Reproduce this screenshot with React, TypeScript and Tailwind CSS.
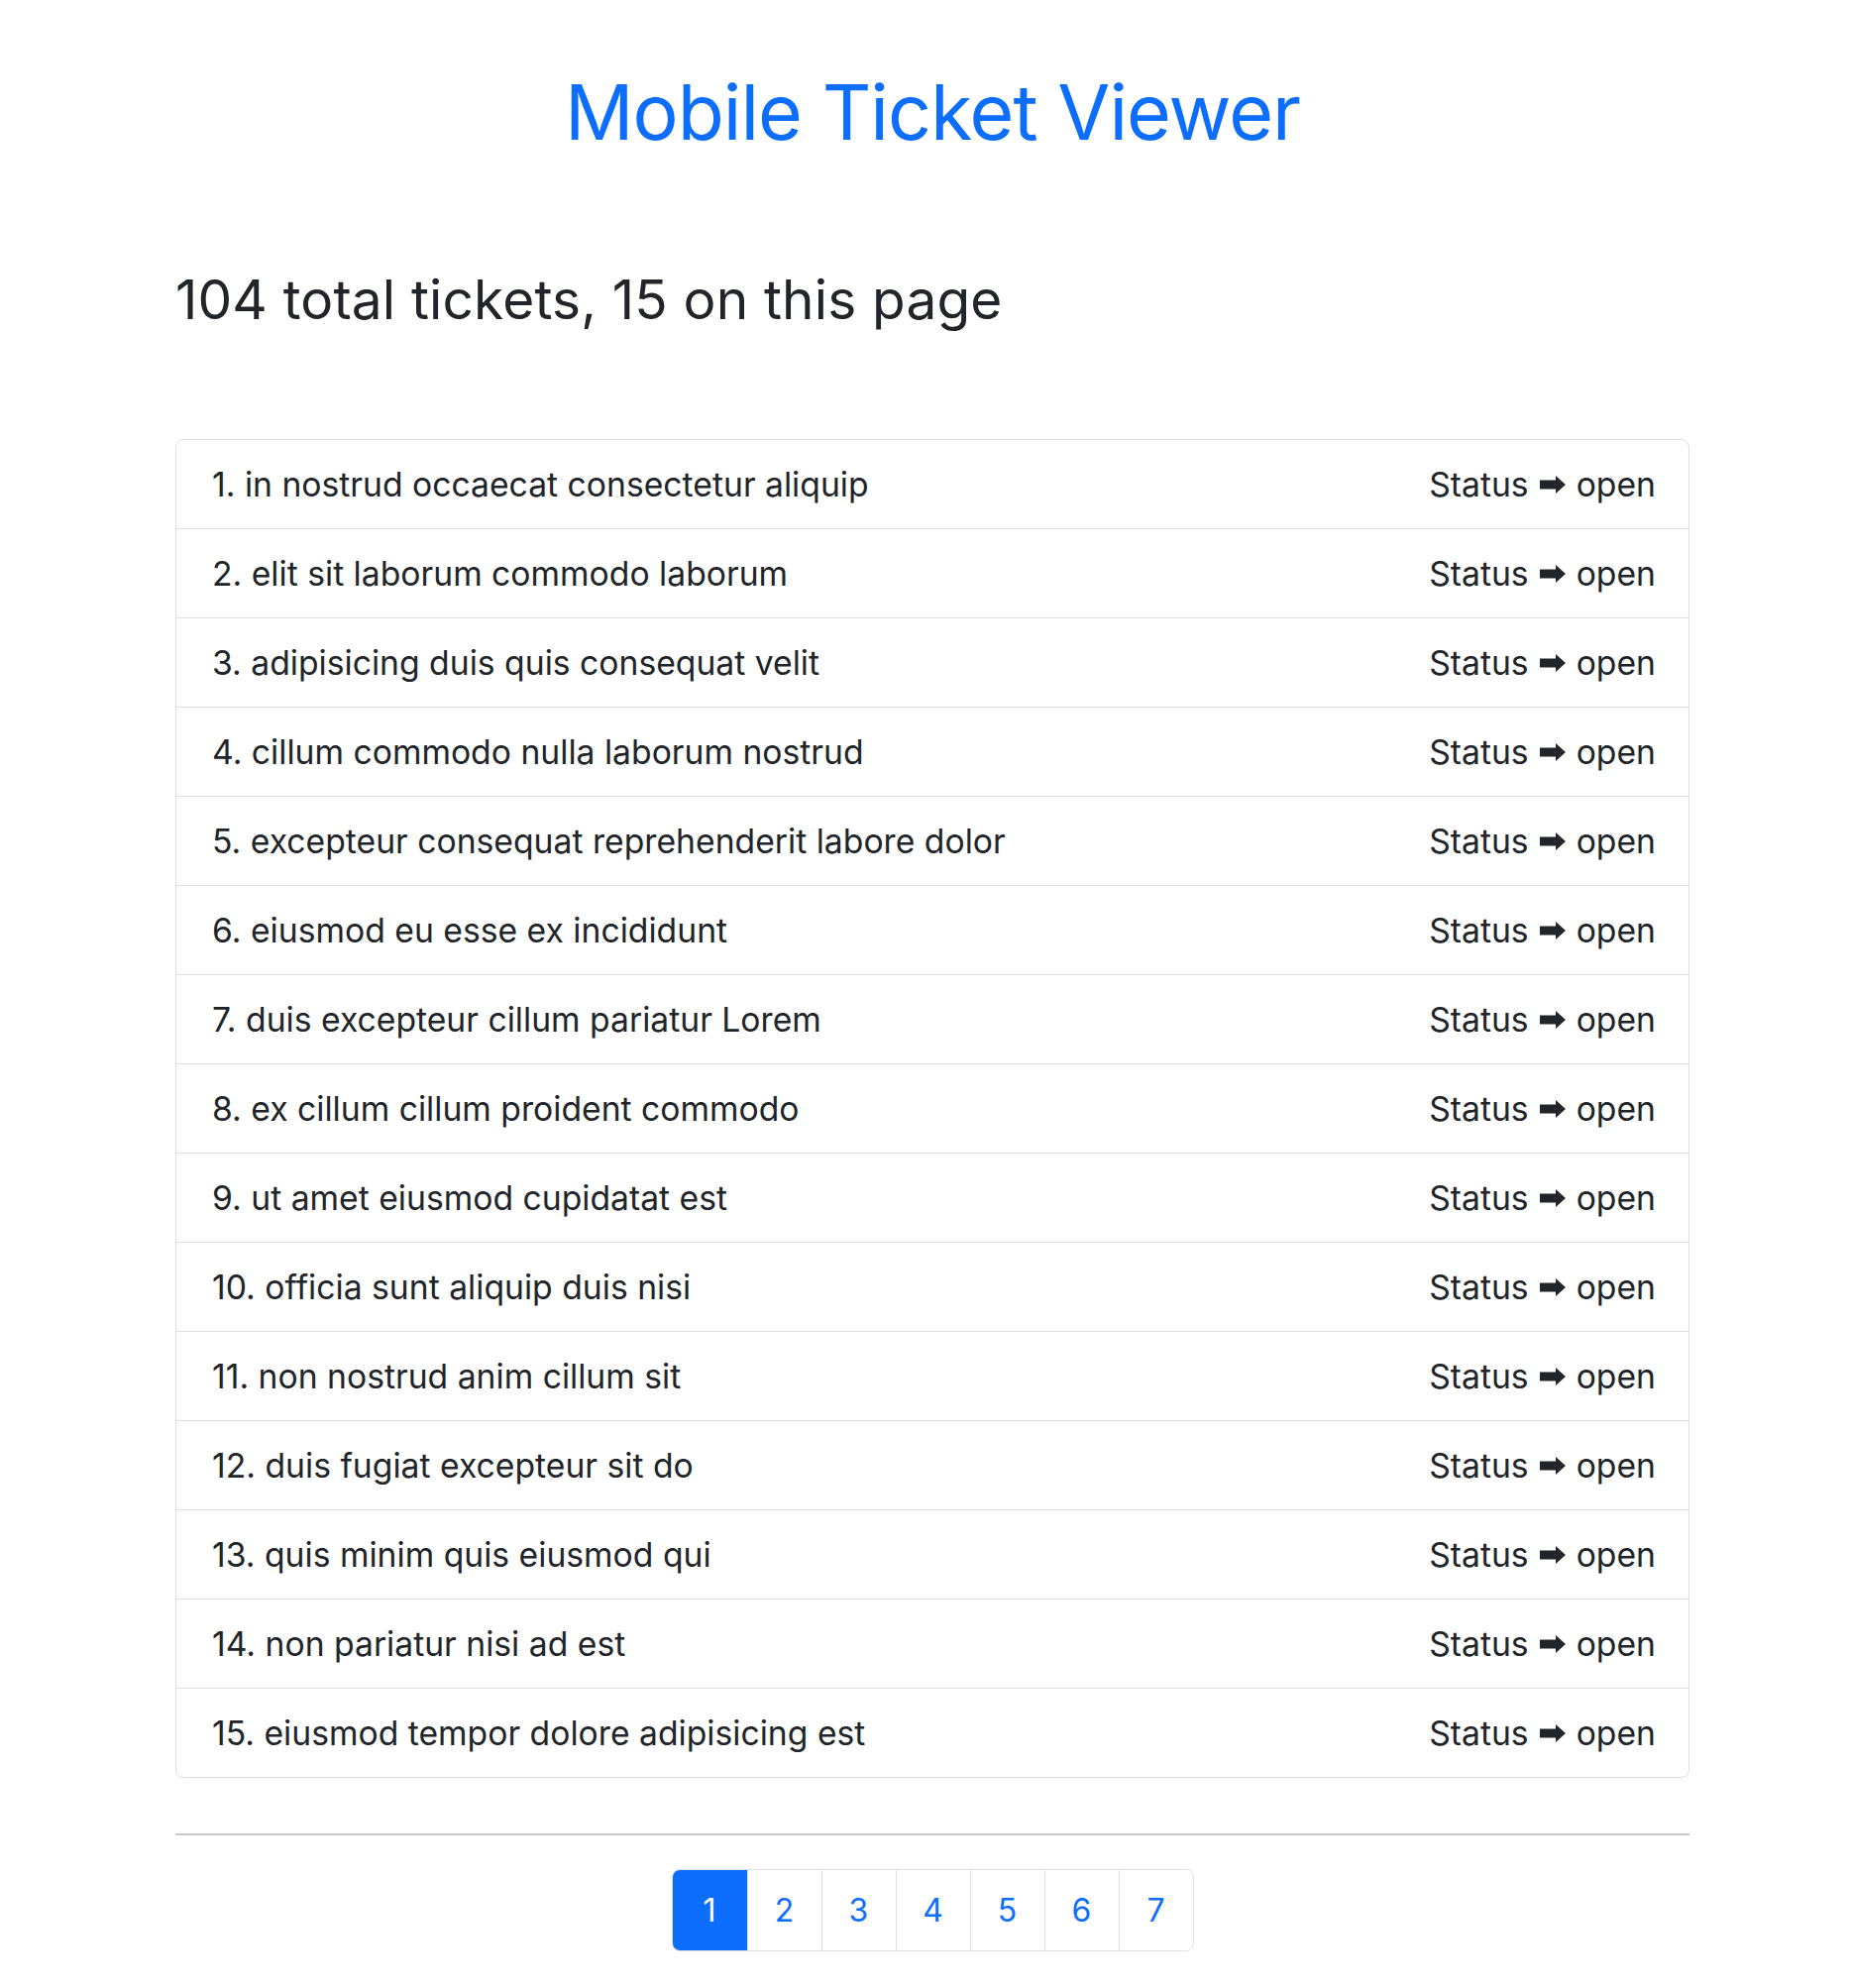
import React from 'react';

interface Ticket {
  id: number;
  subject: string;
  status: string;
}

const subjects = [
  'in nostrud occaecat consectetur aliquip',
  'elit sit laborum commodo laborum',
  'adipisicing duis quis consequat velit',
  'cillum commodo nulla laborum nostrud',
  'excepteur consequat reprehenderit labore dolor',
  'eiusmod eu esse ex incididunt',
  'duis excepteur cillum pariatur Lorem',
  'ex cillum cillum proident commodo',
  'ut amet eiusmod cupidatat est',
  'officia sunt aliquip duis nisi',
  'non nostrud anim cillum sit',
  'duis fugiat excepteur sit do',
  'quis minim quis eiusmod qui',
  'non pariatur nisi ad est',
  'eiusmod tempor dolore adipisicing est',
];

const tickets: Ticket[] = subjects.map((subject, i) => ({ id: i + 1, subject, status: 'open' }));

const pages = [1, 2, 3, 4, 5, 6, 7];

// black rightwards arrow, drawn so it doesn't depend on an emoji font
const StatusArrow: React.FC = () => (
  <svg width="26" height="18" viewBox="0 0 26 18" className="mx-[11px] inline-block" aria-hidden="true">
    <rect x="0" y="4.5" width="17" height="9" fill="#212529" />
    <polygon points="16,0 26,9 16,18" fill="#212529" />
  </svg>
);

const TicketRow: React.FC<{ ticket: Ticket; last: boolean }> = ({ ticket, last }) => (
  <li
    className={
      'flex items-center justify-between pl-[36px] pr-[33px] text-[33.7px] leading-[1.5] text-[#212529]' +
      (last ? ' h-[89px]' : ' h-[90px] border-b border-[#dfdfdf]')
    }
  >
    <span>
      {ticket.id}. {ticket.subject}
    </span>
    <span className="flex items-center">
      Status
      <StatusArrow />
      {ticket.status}
    </span>
  </li>
);

const Pagination: React.FC<{ current: number }> = ({ current }) => (
  <nav className="flex justify-center">
    <ul className="flex h-[83px] overflow-hidden rounded-[8px] border border-[#dee2e6]">
      {pages.map((p, i) => (
        <li
          key={p}
          className={
            'flex w-[75px] items-center justify-center text-[32px] ' +
            (p === current ? 'bg-[#0d6efd] text-white' : 'bg-white text-[#0d6efd]') +
            (i > 0 ? ' border-l border-[#dee2e6]' : '')
          }
        >
          {p}
        </li>
      ))}
    </ul>
  </nav>
);

export default function App() {
  return (
    <div className="min-h-screen bg-white pl-[16px] font-['Inter','Liberation_Sans',sans-serif] text-[#212529]">
      <div className="mx-auto w-[1528px] pt-[67px] pb-[37px]">
        <h1 className="text-center text-[77px] leading-[1.2] font-normal tracking-[-1px] text-[#0d6efd]">
          Mobile Ticket Viewer
        </h1>

        <h2 className="mt-[110px] text-[55px] leading-[1.2] font-normal tracking-[0.15px]">
          104 total tickets, 15 on this page
        </h2>

        <ul className="mt-[108px] rounded-[8px] border border-[#dfdfdf]">
          {tickets.map((t, i) => (
            <TicketRow key={t.id} ticket={t} last={i === tickets.length - 1} />
          ))}
        </ul>

        <hr className="mt-[56px] h-[2px] border-0 bg-[#c8c9ca]" />

        <div className="mt-[34px]">
          <Pagination current={1} />
        </div>
      </div>
    </div>
  );
}
